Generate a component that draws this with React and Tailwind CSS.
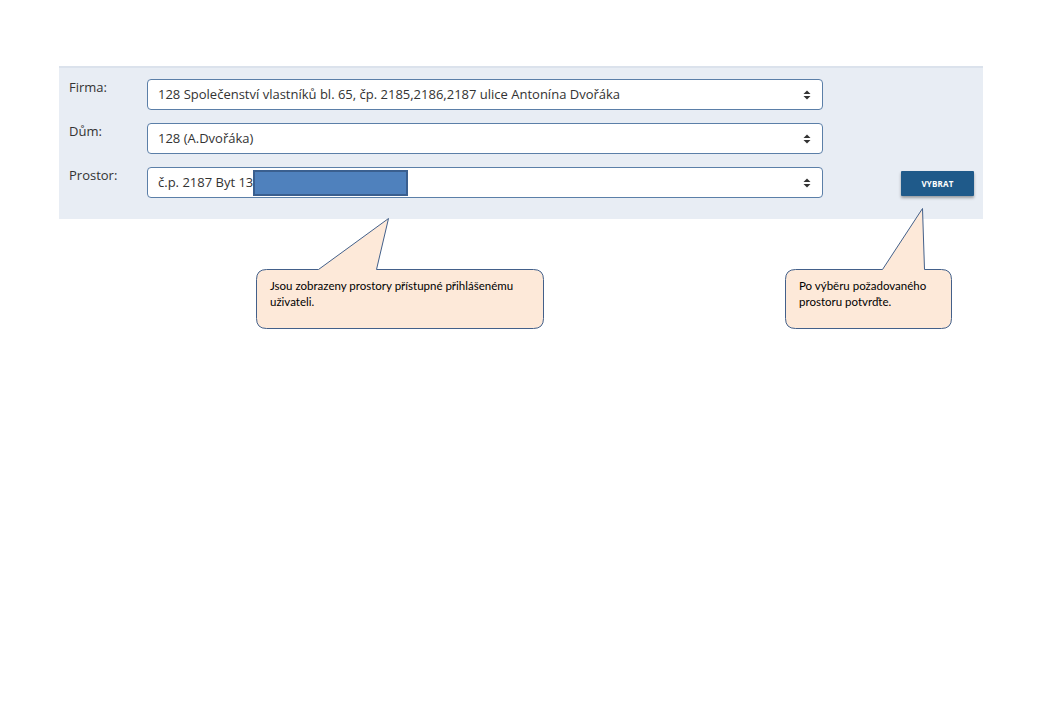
import React from 'react';

function Chevrons() {
  return (
    <svg width="8" height="10" viewBox="0 0 8 10" className="shrink-0">
      <path d="M4 0.5 L7.5 4 L0.5 4 Z" fill="#333" />
      <path d="M4 9.5 L7.5 6 L0.5 6 Z" fill="#333" />
    </svg>
  );
}

function SelectBox({ children }) {
  return (
    <div className="w-[676px] h-[31px] bg-white border border-[#5b7fa8] rounded-[4px] flex items-center pl-[10px] pr-[11px]">
      <div className="flex-1 flex items-center text-[13px] text-[#333] whitespace-nowrap">{children}</div>
      <Chevrons />
    </div>
  );
}

function Row({ label, children, extra }) {
  return (
    <div className="flex items-start">
      <div className="w-[78px] text-[13px] text-[#333] leading-[16px]">{label}</div>
      {children}
      {extra}
    </div>
  );
}

function Callout({ left, top, width, height, tail, children }) {
  // tail: [x1, apexX, apexY, x2] relative to box top-left, apexY negative
  const [x1, ax, ay, x2] = tail;
  const pad = -ay + 2;
  const w = width;
  const h = height;
  const r = 10;
  const d = `M ${r} ${pad} L ${x1} ${pad} L ${ax} ${pad + ay} L ${x2} ${pad} L ${w - r} ${pad} Q ${w} ${pad} ${w} ${pad + r} L ${w} ${pad + h - r} Q ${w} ${pad + h} ${w - r} ${pad + h} L ${r} ${pad + h} Q 0 ${pad + h} 0 ${pad + h - r} L 0 ${pad + r} Q 0 ${pad} ${r} ${pad} Z`;
  return (
    <div className="absolute" style={{ left, top: top - pad, width: w + 2, height: h + pad + 2 }}>
      <svg width={w + 2} height={h + pad + 2} className="absolute left-0 top-0 overflow-visible">
        <path d={d} transform="translate(0.5 0.5)" fill="#fde9d9" stroke="#43608a" strokeWidth="1" />
      </svg>
      <div
        className="absolute left-[14px] text-[11.5px] leading-[16px] text-black"
        style={{ top: pad + 9, right: 12, fontFamily: 'Lato, "Open Sans", sans-serif' }}
      >
        {children}
      </div>
    </div>
  );
}

export default function App() {
  return (
    <div className="relative w-[1040px] h-[720px] bg-white" style={{ fontFamily: '"Open Sans", "Noto Sans", sans-serif' }}>
      <div className="h-[66px]" />
      <div className="ml-[59px] w-[924px] bg-[#e8edf4] border-t-2 border-[#dbe2ec] pt-[11px] pb-[21px] px-[10px] flex flex-col gap-[13px]">
        <Row label="Firma:">
          <SelectBox>128 Společenství vlastníků bl. 65, čp. 2185,2186,2187 ulice Antonína Dvořáka</SelectBox>
        </Row>
        <Row label="Dům:">
          <SelectBox>128 (A.Dvořáka)</SelectBox>
        </Row>
        <Row
          label="Prostor:"
          extra={
            <button className="ml-auto mt-[4px] mr-[-1px] w-[73px] h-[25px] bg-[#1f5a8a] text-white text-[8px] font-bold tracking-[0.2px] shadow-[0_2px_3px_rgba(0,0,0,0.35)] rounded-[1px]">
              VYBRAT
            </button>
          }
        >
          <SelectBox>
            <span>č.p. 2187 Byt 13</span>
            <span className="inline-block w-[155px] h-[26px] bg-[#4f81bd] border-2 border-[#3a5f8f]" />
          </SelectBox>
        </Row>
      </div>

      <Callout left={256} top={269} width={287} height={59} tail={[62, 132, -51, 120]}>
        Jsou zobrazeny prostory přístupné přihlášenému uživateli.
      </Callout>
      <Callout left={785} top={269} width={166} height={59} tail={[97, 137, -61, 139]}>
        Po výběru požadovaného prostoru potvrďte.
      </Callout>
    </div>
  );
}
